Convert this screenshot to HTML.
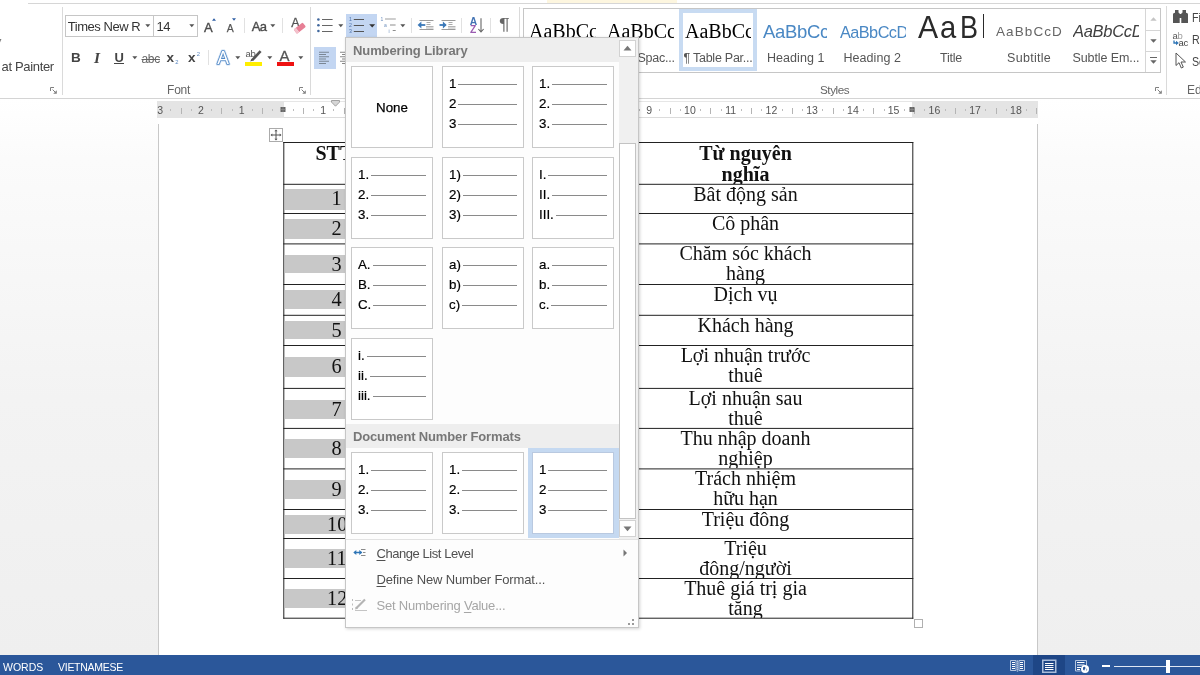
<!DOCTYPE html>
<html>
<head>
<meta charset="utf-8">
<title>Word</title>
<style>
*{box-sizing:border-box;margin:0;padding:0}
html,body{width:1200px;height:675px;overflow:hidden;background:#fff}
body{position:relative;will-change:transform;font-family:"Liberation Sans",sans-serif;font-size:12px;color:#444}
.abs{position:absolute}
.t{position:absolute;white-space:nowrap;line-height:1}
/* top */
#topline{left:28px;top:3px;width:1172px;height:1px;background:#d6d6d6}
#topyellow{left:547px;top:0;width:130px;height:3px;background:#fdf6df}
/* ribbon */
#ribbon{left:0;top:4px;width:1200px;height:94px;background:#fff}
#ribbonline{left:0;top:98px;width:1200px;height:1px;background:#d4d4d4}
.vsep{position:absolute;width:1px;background:#e1e1e1}
.gsep{position:absolute;width:1px;background:#dadada;top:7px;height:88px}
/* workspace */
#work{left:0;top:99px;width:1200px;height:556px;background:linear-gradient(#ffffff 0px,#fbfbfb 60px,#f3f3f3 300px,#efefef 557px)}
#page{left:158px;top:124px;width:880px;height:531px;background:#fff;border-left:1px solid #c8c8c8;border-right:1px solid #c8c8c8}
#pagetop{left:158px;top:99px;width:880px;height:25px;background:#fff}
/* ruler */
#ruler{left:157px;top:101px;width:881px;height:17px;background:#e4e4e4}
#rulerw{left:284px;top:101px;width:628px;height:17px;background:#fff;border-top:1px solid #e6e6e6;border-bottom:1px solid #dcdcdc}
.rn{position:absolute;top:104.6px;font-size:10.5px;line-height:11px;color:#555;width:20px;margin-left:-10px;text-align:center}
.rt{position:absolute;top:108px;width:1px;height:6px;background:#b4b4b4}
.rd{position:absolute;top:109px;width:1px;height:2px;background:#bdbdbd}
/* status */
#status{left:0;top:655px;width:1200px;height:20px;background:#2b579a}
#status .t{color:#fff;font-size:10.5px;top:6.5px}
/* table */
.hl{position:absolute;background:#2b2b2b;height:1px}
.vl{position:absolute;background:#2b2b2b;width:1px}
.cell{position:absolute;left:579px;width:333px;text-align:center;font-family:"Liberation Serif",serif;font-size:20px;line-height:20.4px;color:#111;white-space:nowrap;overflow:hidden}
.num{position:absolute;left:285px;width:62px;background:#c8c8c8;font-family:"Liberation Serif",serif;font-size:20.3px;line-height:18.3px;color:#111;text-align:left;overflow:hidden;white-space:nowrap}

.ddh{font-weight:bold;font-size:13px;color:#777;line-height:13px}
.mi{font-size:13px;color:#505050;line-height:15px}
.mi u{text-decoration-thickness:1px;text-underline-offset:2px}
.tile{position:absolute;width:82px;height:82px;background:#fff;border:1px solid #c9c9c9}
.tile .none{position:absolute;left:0;width:80px;top:33px;text-align:center;font-size:13.3px;line-height:15px;color:#000;-webkit-text-stroke:0.25px #000}
.tile .ln{position:absolute;left:6px;width:68px;height:16px;display:flex;align-items:center;font-size:13.3px;line-height:16px;color:#000;-webkit-text-stroke:0.2px #000}
.tile .ln i{flex:1;height:1px;background:#8a8a8a;box-shadow:0 0 0.6px #8a8a8a;margin-left:2px;margin-top:0px}
/*DDCSS*/

.sty{position:absolute;top:9px;height:40px;overflow:hidden}
.sty span{position:absolute;white-space:nowrap;line-height:1.15}
.sl{top:51px;font-size:12.5px;line-height:14px;color:#555;letter-spacing:-0.25px}
/*RIBCSS*/
</style>
</head>
<body>
<div class="abs" id="ribbon"></div>
<div class="abs" id="topyellow"></div>
<div class="abs" id="topline"></div>
<div class="abs" id="ribbonline"></div>
<div class="abs" id="work"></div>
<div class="abs" id="page"></div>
<div class="abs" id="pagetop"></div>
<div class="abs" id="ruler"></div>
<div class="abs" id="rulerw"></div>
<div id="rulermarks"><span class="rn" style="left:160.1px">3</span><i class="rd" style="left:170.3px"></i><i class="rt" style="left:180.5px"></i><i class="rd" style="left:190.7px"></i><span class="rn" style="left:200.9px">2</span><i class="rd" style="left:211.1px"></i><i class="rt" style="left:221.3px"></i><i class="rd" style="left:231.5px"></i><span class="rn" style="left:241.6px">1</span><i class="rd" style="left:251.8px"></i><i class="rt" style="left:262.0px"></i><i class="rd" style="left:272.2px"></i><i class="rd" style="left:292.6px"></i><i class="rt" style="left:302.8px"></i><i class="rd" style="left:313.0px"></i><span class="rn" style="left:323.1px">1</span><i class="rd" style="left:333.3px"></i><i class="rt" style="left:343.5px"></i><i class="rd" style="left:353.7px"></i><span class="rn" style="left:363.9px">2</span><i class="rd" style="left:374.1px"></i><i class="rt" style="left:384.3px"></i><i class="rd" style="left:394.5px"></i><span class="rn" style="left:404.6px">3</span><i class="rd" style="left:414.8px"></i><i class="rt" style="left:425.0px"></i><i class="rd" style="left:435.2px"></i><span class="rn" style="left:445.4px">4</span><i class="rd" style="left:455.6px"></i><i class="rt" style="left:465.8px"></i><i class="rd" style="left:476.0px"></i><span class="rn" style="left:486.1px">5</span><i class="rd" style="left:496.3px"></i><i class="rt" style="left:506.5px"></i><i class="rd" style="left:516.7px"></i><span class="rn" style="left:526.9px">6</span><i class="rd" style="left:537.1px"></i><i class="rt" style="left:547.3px"></i><i class="rd" style="left:557.5px"></i><span class="rn" style="left:567.6px">7</span><i class="rd" style="left:577.8px"></i><i class="rt" style="left:588.0px"></i><i class="rd" style="left:598.2px"></i><span class="rn" style="left:608.4px">8</span><i class="rd" style="left:618.6px"></i><i class="rt" style="left:628.8px"></i><i class="rd" style="left:639.0px"></i><span class="rn" style="left:649.1px">9</span><i class="rd" style="left:659.3px"></i><i class="rt" style="left:669.5px"></i><i class="rd" style="left:679.7px"></i><span class="rn" style="left:689.9px">10</span><i class="rd" style="left:700.1px"></i><i class="rt" style="left:710.3px"></i><i class="rd" style="left:720.5px"></i><span class="rn" style="left:730.6px">11</span><i class="rd" style="left:740.8px"></i><i class="rt" style="left:751.0px"></i><i class="rd" style="left:761.2px"></i><span class="rn" style="left:771.4px">12</span><i class="rd" style="left:781.6px"></i><i class="rt" style="left:791.8px"></i><i class="rd" style="left:802.0px"></i><span class="rn" style="left:812.1px">13</span><i class="rd" style="left:822.3px"></i><i class="rt" style="left:832.5px"></i><i class="rd" style="left:842.7px"></i><span class="rn" style="left:852.9px">14</span><i class="rd" style="left:863.1px"></i><i class="rt" style="left:873.3px"></i><i class="rd" style="left:883.5px"></i><span class="rn" style="left:893.6px">15</span><i class="rd" style="left:903.8px"></i><i class="rt" style="left:914.0px"></i><i class="rd" style="left:924.2px"></i><span class="rn" style="left:934.4px">16</span><i class="rd" style="left:944.6px"></i><i class="rt" style="left:954.8px"></i><i class="rd" style="left:965.0px"></i><span class="rn" style="left:975.1px">17</span><i class="rd" style="left:985.3px"></i><i class="rt" style="left:995.5px"></i><i class="rd" style="left:1005.7px"></i><span class="rn" style="left:1015.9px">18</span><i class="rd" style="left:1026.1px"></i><i class="rt" style="left:1036.3px"></i><svg class="abs" style="left:280px;top:107px" width="6" height="5" viewBox="0 0 6 5"><path d="M0.5 0h5v5h-5z" fill="#666"/><path d="M0.5 2.5h5M3 0v5" stroke="#999" stroke-width="0.6"/></svg><svg class="abs" style="left:909px;top:107px" width="6" height="5" viewBox="0 0 6 5"><path d="M0.5 0h5v5h-5z" fill="#666"/><path d="M0.5 2.5h5M3 0v5" stroke="#999" stroke-width="0.6"/></svg><svg class="abs" style="left:330.5px;top:100px" width="9" height="7" viewBox="0 0 9 7"><path d="M0.5 0.5h8v1.6L4.5 6.2L0.5 2.1z" fill="#d6d6d6" stroke="#9a9a9a" stroke-width="0.9"/></svg></div>
<!--RIBBON--><div id="rib">
<!-- left clipboard fragment -->
<span class="t" style="left:1.5px;top:59px;font-size:13px;line-height:15px;letter-spacing:-0.33px;color:#444">at Painter</span>
<svg class="abs" style="left:0;top:39px" width="2" height="4"><path d="M0 0h1.4l-1.2 3.5z" fill="#777"/></svg>
<i class="gsep" style="left:62px"></i>
<svg class="abs lau" style="left:50px;top:86.5px" width="7" height="7" viewBox="0 0 7 7"><path d="M0.5 4v-3.500h3.500" stroke="#808080" fill="none"/><path d="M2.600 2.600l3 3" stroke="#808080" fill="none"/><path d="M6.800 3.200v3.600h-3.600z" fill="#808080"/></svg>
<!-- font boxes -->
<div class="abs" style="left:65px;top:15px;width:89px;height:22px;border:1px solid #c6c6c6;background:#fff"></div>
<div class="abs" style="left:153px;top:15px;width:45px;height:22px;border:1px solid #c6c6c6;background:#fff"></div>
<span class="t" style="left:67.7px;top:19px;font-size:13px;line-height:15px;letter-spacing:-0.45px;color:#333">Times New R</span>
<span class="t" style="left:156.5px;top:19px;font-size:13px;line-height:15px;letter-spacing:-0.4px;color:#333">14</span>
<svg class="abs" style="left:145px;top:24px" width="6" height="4"><path d="M0.3 0.3h5L2.8 3.3z" fill="#555"/></svg>
<svg class="abs" style="left:189px;top:24px" width="6" height="4"><path d="M0.3 0.3h5L2.8 3.3z" fill="#555"/></svg>
<!-- grow / shrink -->
<span class="t" style="left:204px;top:19.500px;font-size:13px;line-height:15px;color:#4a4a4a;-webkit-text-stroke:0.350px #4a4a4a">A</span>
<svg class="abs" style="left:211.5px;top:17.5px" width="4" height="3"><path d="M0 2.8L2 0.2L4 2.8z" fill="#2f5fa5"/></svg>
<span class="t" style="left:226.700px;top:21.500px;font-size:10.500px;line-height:12px;color:#555;-webkit-text-stroke:0.250px #555">A</span>
<svg class="abs" style="left:231.7px;top:17.5px" width="4" height="3"><path d="M0 0.2L2 2.8L4 0.2z" fill="#2f5fa5"/></svg>
<i class="vsep" style="left:244px;top:18px;height:15px"></i>
<span class="t" style="left:251.700px;top:18.500px;font-size:13px;line-height:15px;letter-spacing:-0.700px;color:#4a4a4a;-webkit-text-stroke:0.350px #4a4a4a">Aa</span>
<svg class="abs" style="left:270px;top:24px" width="6" height="4"><path d="M0.3 0.3h5L2.8 3.3z" fill="#555"/></svg>
<i class="vsep" style="left:282px;top:18px;height:15px"></i>
<!-- clear formatting -->
<span class="t" style="left:291.300px;top:16px;font-size:12.500px;line-height:14px;color:#555;-webkit-text-stroke:0.300px #555">A</span>
<svg class="abs" style="left:293px;top:21px" width="14" height="13" viewBox="0 0 14 13"><g transform="rotate(-38 7 7)"><rect x="1" y="4.200" width="11.500" height="5.600" rx="1.300" fill="#e77f95"/><rect x="1" y="4.200" width="2.200" height="5.600" rx="0.800" fill="#f4c3cd"/><rect x="3.200" y="4.200" width="0.700" height="5.600" fill="#fff" opacity="0.700"/></g></svg>
<i class="gsep" style="left:310px"></i>
<!-- row 2 -->
<span class="t" style="left:71px;top:50px;font-size:13.5px;line-height:15px;font-weight:bold;color:#444">B</span>
<span class="t" style="left:94px;top:50px;font-family:'Liberation Serif',serif;font-size:15.500px;line-height:15px;font-style:italic;font-weight:bold;color:#444">I</span>
<span class="t" style="left:114.5px;top:50px;font-size:13px;line-height:15px;color:#444;font-weight:bold;letter-spacing:-0.3px">U</span>
<i class="abs" style="left:114px;top:63px;width:10px;height:1px;background:#444"></i>
<svg class="abs" style="left:131.5px;top:56px" width="6" height="4"><path d="M0.3 0.3h5L2.8 3.3z" fill="#555"/></svg>
<span class="t" style="left:141.5px;top:52px;font-size:12px;line-height:14px;color:#666;text-decoration:line-through;letter-spacing:-0.3px">abc</span>
<span class="t" style="left:166.5px;top:50px;font-size:13.5px;line-height:15px;font-weight:bold;color:#444">x</span>
<span class="t" style="left:175.300px;top:58.500px;font-size:5.800px;line-height:6px;color:#5b87c0">2</span>
<span class="t" style="left:188px;top:50px;font-size:13.5px;line-height:15px;font-weight:bold;color:#444">x</span>
<span class="t" style="left:196.800px;top:50.500px;font-size:5.800px;line-height:6px;color:#5b87c0">2</span>
<i class="vsep" style="left:208px;top:50px;height:15px"></i>
<!-- text effects A -->
<svg class="abs" style="left:214px;top:48px" width="18" height="18" viewBox="0 0 18 18"><text x="9" y="15.5" text-anchor="middle" font-family="Liberation Sans" font-size="17.5" fill="none" stroke="#cfe0f4" stroke-width="3" stroke-linejoin="round">A</text><text x="9" y="15.5" text-anchor="middle" font-family="Liberation Sans" font-size="17.5" fill="#fff" stroke="#4f87c5" stroke-width="1.6" stroke-linejoin="round" paint-order="stroke">A</text></svg>
<svg class="abs" style="left:234.5px;top:56px" width="6" height="4"><path d="M0.3 0.3h5L2.8 3.3z" fill="#555"/></svg>
<!-- highlight -->
<span class="t" style="left:245.5px;top:49px;font-size:9.5px;line-height:10px;color:#555;letter-spacing:-0.3px">ab</span>
<svg class="abs" style="left:249px;top:49px" width="14" height="13" viewBox="0 0 14 13"><path d="M3.2 11.2L11.6 2.2" stroke="#555" stroke-width="2.6" stroke-linecap="butt"/><path d="M1.2 12.5l1.2-2.8 1.9 1.8z" fill="#555"/></svg>
<i class="abs" style="left:245px;top:62px;width:17px;height:4px;background:#ffee00"></i>
<svg class="abs" style="left:266.5px;top:56px" width="6" height="4"><path d="M0.3 0.3h5L2.8 3.3z" fill="#555"/></svg>
<!-- font colour -->
<span class="t" style="left:279.500px;top:48px;font-size:15px;line-height:16px;color:#555;-webkit-text-stroke:0.300px #555">A</span>
<i class="abs" style="left:277px;top:62px;width:17px;height:4px;background:#ee1111"></i>
<svg class="abs" style="left:298px;top:56px" width="6" height="4"><path d="M0.3 0.3h5L2.8 3.3z" fill="#555"/></svg>
<span class="t" style="left:167px;top:83px;font-size:12px;line-height:14px;letter-spacing:-0.2px;color:#666">Font</span>
<svg class="abs lau" style="left:299px;top:86.5px" width="7" height="7" viewBox="0 0 7 7"><path d="M0.5 4v-3.500h3.500" stroke="#808080" fill="none"/><path d="M2.600 2.600l3 3" stroke="#808080" fill="none"/><path d="M6.800 3.200v3.600h-3.600z" fill="#808080"/></svg>
<!-- paragraph group row1 -->
<svg class="abs" style="left:316px;top:16px" width="18" height="18" viewBox="0 0 18 18"><circle cx="2.4" cy="3.5" r="1.3" fill="#41689e"/><circle cx="2.4" cy="9.3" r="1.3" fill="#41689e"/><circle cx="2.4" cy="15" r="1.3" fill="#41689e"/><path d="M6 3.5h10.6M6 9.5h10.6M6 15.5h10.6" stroke="#666" stroke-width="1"/></svg>
<svg class="abs" style="left:337.5px;top:24px" width="6" height="4"><path d="M0.3 0.3h5L2.8 3.3z" fill="#555"/></svg>
<div class="abs" style="left:346px;top:14px;width:31px;height:23px;background:#c3d6f2"></div>
<svg class="abs" style="left:348px;top:16px" width="18" height="18" viewBox="0 0 18 18"><g font-family="Liberation Sans" font-size="5.2" fill="#4d74ad"><text x="0.9" y="5.4">1</text><text x="0.9" y="11.2">2</text><text x="0.9" y="17">3</text></g><path d="M5.8 3.5h10.2M5.8 9.5h10.2M5.8 15.5h10.2" stroke="#555" stroke-width="1"/></svg>
<svg class="abs" style="left:368.5px;top:24px" width="7" height="4"><path d="M0.2 0.2h6L3.2 3.6z" fill="#333"/></svg>
<svg class="abs" style="left:380px;top:16px" width="18" height="18" viewBox="0 0 18 18"><g font-family="Liberation Sans" font-size="5" fill="#6d8fbd"><text x="0.4" y="5.2">1</text><text x="4" y="10.8">a</text><text x="8.6" y="16.6">i</text></g><path d="M5 3h10.8" stroke="#c2c2c2" stroke-width="1.6"/><path d="M10 9h5.6M12.7 14.5h3" stroke="#8e8e8e" stroke-width="1.2"/></svg>
<svg class="abs" style="left:399.5px;top:24px" width="6" height="4"><path d="M0.3 0.3h5L2.8 3.3z" fill="#555"/></svg>
<i class="vsep" style="left:411px;top:18px;height:15px"></i>
<svg class="abs" style="left:417px;top:19px" width="17" height="12" viewBox="0 0 17 12"><path d="M2.500 1.500h14M2.500 10.500h14" stroke="#9a9a9a" stroke-width="1"/><path d="M9.500 3.500h4M9.500 5.500h4" stroke="#aaa" stroke-width="1"/><path d="M9 7.500h7.500M9 9h7.500" stroke="#b5b5b5" stroke-width="1"/><path d="M2 6h6.300" stroke="#3a78b8" stroke-width="1.800"/><path d="M0.600 6L4.400 2.600v6.800z" fill="#3a78b8"/></svg>
<svg class="abs" style="left:438.500px;top:19px" width="17" height="12" viewBox="0 0 17 12"><path d="M2.500 1.500h14M2.500 10.500h14" stroke="#9a9a9a" stroke-width="1"/><path d="M9.500 3.500h4M9.500 5.500h4" stroke="#aaa" stroke-width="1"/><path d="M9 7.500h7.500M9 9h7.500" stroke="#b5b5b5" stroke-width="1"/><path d="M0.500 6h6" stroke="#3a78b8" stroke-width="1.800"/><path d="M7.700 6L3.900 2.600v6.800z" fill="#3a78b8"/></svg>
<i class="vsep" style="left:461px;top:18px;height:15px"></i>
<span class="t" style="left:469.700px;top:16.500px;font-size:10.300px;line-height:10px;color:#4474b4;font-weight:bold">A</span>
<span class="t" style="left:470px;top:25px;font-size:10.300px;line-height:10px;color:#9a5cb0;font-weight:bold">Z</span>
<svg class="abs" style="left:477.300px;top:18px" width="8" height="15" viewBox="0 0 8 15"><path d="M4 0.300v13.500M1.400 11L4 14l2.600-3" stroke="#666" stroke-width="1.100" fill="none"/></svg>
<i class="vsep" style="left:490px;top:18px;height:15px"></i>
<span class="t" style="left:498.5px;top:15.5px;font-size:17px;line-height:18px;color:#666;transform:scaleX(1.18);transform-origin:0 0">¶</span>
<i class="gsep" style="left:519px"></i>
<!-- row2 align -->
<div class="abs" style="left:314px;top:47px;width:22px;height:22px;background:#c3d6f2"></div>
<svg class="abs" style="left:318px;top:51px" width="13" height="14" viewBox="0 0 13 14"><path d="M1 1.3h10M1 5.8h10M1 10.3h10" stroke="#7b8794" stroke-width="1.1"/><path d="M1 3.55h7M1 8.05h7M1 12.5h7" stroke="#7b8794" stroke-width="1.1"/></svg>
<svg class="abs" style="left:339px;top:51px" width="7" height="14" viewBox="0 0 7 14"><path d="M1 1.3h6M1 5.8h6M1 10.3h6" stroke="#888" stroke-width="1.1"/><path d="M3 3.55h4M3 8.05h4M3 12.5h4" stroke="#888" stroke-width="1.1"/></svg>
<!-- styles gallery -->
<div class="abs" style="left:523px;top:8px;width:638px;height:65px;border:1px solid #c6c6c6;background:#fff"></div>
<i class="abs" style="left:1145px;top:9px;width:1px;height:63px;background:#d6d6d6"></i>
<i class="abs" style="left:1146px;top:30px;width:14px;height:1px;background:#d6d6d6"></i>
<i class="abs" style="left:1146px;top:51px;width:14px;height:1px;background:#d6d6d6"></i>
<svg class="abs" style="left:1150px;top:17px" width="7" height="4"><path d="M0.3 3.7L3.5 0.3L6.7 3.7z" fill="#c4c4c4"/></svg>
<svg class="abs" style="left:1150px;top:39px" width="7" height="4"><path d="M0.3 0.3h6.4L3.5 3.7z" fill="#666"/></svg>
<svg class="abs" style="left:1150px;top:57px" width="7" height="8"><path d="M0 0.5h7" stroke="#666"/><path d="M0.3 3.3h6.4L3.5 6.7z" fill="#666"/></svg>
<div class="sty" style="left:529px;width:66.500px"><span style="font-family:'Liberation Serif',serif;font-size:20px;color:#000;top:11px;left:0px">AaBbCc</span></div>
<div class="sty" style="left:607px;width:67px"><span style="font-family:'Liberation Serif',serif;font-size:20px;color:#000;top:11px;left:0px">AaBbCc</span></div>
<span class="t sl" style="left:637.5px">Spac...</span>
<div class="abs" style="left:679px;top:9px;width:78px;height:62px;border:4px solid #c8dbf2;background:#fff"></div>
<div class="sty" style="left:685px;width:66px"><span style="font-family:'Liberation Serif',serif;font-size:20px;color:#000;top:11px;left:0px">AaBbCc</span></div>
<span class="t sl" style="left:683.5px">¶ Table Par...</span>
<div class="sty" style="left:763px;width:64px"><span style="font-size:18.5px;color:#4a88c4;top:11.5px;left:0px;letter-spacing:-0.3px">AaBbCc</span></div>
<span class="t sl" style="left:767px;letter-spacing:0.050px">Heading 1</span>
<div class="sty" style="left:840px;width:66px"><span style="font-size:16.3px;color:#4a88c4;top:14px;left:0px;letter-spacing:-0.55px">AaBbCcD</span></div>
<span class="t sl" style="left:843.500px;letter-spacing:0.050px">Heading 2</span>
<div class="sty" style="left:918px;width:66px"><span style="font-size:31.4px;color:#2a2a2a;top:1.2px;left:0px;transform:scaleX(0.96);transform-origin:0 0">A</span><span style="font-size:31.4px;color:#2a2a2a;top:1.2px;left:22.3px;transform:scaleX(0.93);transform-origin:0 0">a</span><span style="font-size:31.4px;color:#2a2a2a;top:1.2px;left:41.5px;transform:scaleX(0.86);transform-origin:0 0">B</span><i style="position:absolute;left:64.5px;top:5px;width:1.6px;height:24px;background:#2a2a2a"></i></div>
<span class="t sl" style="left:940px">Title</span>
<div class="sty" style="left:996px;width:66px"><span style="font-size:13.5px;color:#666;top:15.3px;left:0px;letter-spacing:1.1px">AaBbCcD</span></div>
<span class="t sl" style="left:1007px;letter-spacing:0.300px">Subtitle</span>
<div class="sty" style="left:1073px;width:66px"><span style="font-size:16.5px;color:#404040;top:13px;left:0px;font-style:italic;letter-spacing:-0.3px">AaBbCcD</span></div>
<span class="t sl" style="left:1072.500px;letter-spacing:-0.100px">Subtle Em...</span>
<span class="t" style="left:820px;top:83px;font-size:11.7px;line-height:14px;letter-spacing:-0.45px;color:#666">Styles</span>
<svg class="abs lau" style="left:1155px;top:86.5px" width="7" height="7" viewBox="0 0 7 7"><path d="M0.5 4v-3.500h3.500" stroke="#808080" fill="none"/><path d="M2.600 2.600l3 3" stroke="#808080" fill="none"/><path d="M6.800 3.200v3.600h-3.600z" fill="#808080"/></svg>
<i class="gsep" style="left:1166px;top:6px;height:89px"></i>
<!-- editing -->
<svg class="abs" style="left:1172px;top:9px" width="17" height="15" viewBox="0 0 17 15"><path d="M3 1h3.5v3H3zM10.5 1H14v3h-3.5z" fill="#555"/><path d="M1 5.5c0-1 .8-1.8 2-1.8h3.5c.8 0 1.2.6 1.2 1.3V14H1zM9.3 5c0-.7.4-1.3 1.2-1.3H14c1.2 0 2 .8 2 1.8V14H9.3z" fill="#555"/><rect x="7" y="5" width="3" height="4" fill="#555"/></svg>
<span class="t" style="left:1191.500px;top:10px;font-size:13px;line-height:15px;color:#444;transform:scaleX(0.82);transform-origin:0 0">Fi</span>
<span class="t" style="left:1172.5px;top:30.5px;font-size:9.5px;line-height:9px;color:#555;letter-spacing:-0.2px">a<span style="color:#999">b</span></span>
<span class="t" style="left:1178.5px;top:38px;font-size:9.5px;line-height:9px;color:#444;letter-spacing:-0.2px">ac</span>
<svg class="abs" style="left:1172.5px;top:40px" width="6" height="6" viewBox="0 0 6 6"><path d="M1 0.500v2.500h2.500" stroke="#2e75b6" stroke-width="1.300" fill="none"/><path d="M5.800 3L3 0.800v4.400z" fill="#2e75b6"/></svg>
<span class="t" style="left:1191.500px;top:32px;font-size:13px;line-height:15px;color:#444;transform:scaleX(0.82);transform-origin:0 0">Re</span>
<svg class="abs" style="left:1175px;top:52px" width="12" height="17" viewBox="0 0 12 17"><path d="M1 1v12.5l3-2.8 2.3 5.3 2-.9L6 10h4.5z" fill="#fff" stroke="#555" stroke-width="1" stroke-linejoin="round"/></svg>
<span class="t" style="left:1191.500px;top:54px;font-size:13px;line-height:15px;color:#444;transform:scaleX(0.82);transform-origin:0 0">Se</span>
<span class="t" style="left:1187px;top:83px;font-size:12px;line-height:14px;color:#666">Ed</span>

</div>
<!--/RIBBON-->
<!--DOC--><div id="doc"><div class="abs" style="left:269px;top:128px;width:14px;height:14px;border:1px solid #ababab;background:#fff"></div><svg class="abs" style="left:269px;top:128px" width="14" height="14" viewBox="0 0 14 14"><path d="M7 2.5v9M2.5 7h9" stroke="#555" stroke-width="1" fill="none"/><path d="M7 1.5l1.6 1.8h-3.2zM7 12.5l1.6-1.8h-3.2zM1.5 7l1.8-1.6v3.2zM12.5 7l-1.8-1.6v3.2z" fill="#555"/></svg><div class="cell" style="top:142px;height:42px;font-weight:bold;padding-top:1.2px">Từ nguyên<br>nghĩa</div><div class="cell" style="top:184px;height:29px">Bât động sản</div><div class="cell" style="top:213px;height:30px">Cô phân</div><div class="cell" style="top:243px;height:41px">Chăm sóc khách<br>hàng</div><div class="cell" style="top:284px;height:31px">Dịch vụ</div><div class="cell" style="top:315px;height:30px">Khách hàng</div><div class="cell" style="top:345px;height:43px">Lợi nhuận trước<br>thuê</div><div class="cell" style="top:388px;height:40px">Lợi nhuận sau<br>thuê</div><div class="cell" style="top:428px;height:40px">Thu nhập doanh<br>nghiệp</div><div class="cell" style="top:468px;height:41px">Trách nhiệm<br>hữu hạn</div><div class="cell" style="top:509px;height:29px">Triệu đông</div><div class="cell" style="top:538px;height:40px">Triệu<br>đông/người</div><div class="cell" style="top:578px;height:40px">Thuê giá trị gia<br>tăng</div><div class="t" style="left:315.5px;top:143.2px;font-family:'Liberation Serif',serif;font-weight:bold;font-size:20px;color:#111;line-height:20.4px">STT</div><div class="num" style="top:188.5px;height:21.0px;padding-left:46.5px">1</div><div class="num" style="top:219.0px;height:19.5px;padding-left:46.5px">2</div><div class="num" style="top:254.5px;height:18.5px;padding-left:46.5px">3</div><div class="num" style="top:290.0px;height:18.5px;padding-left:46.5px">4</div><div class="num" style="top:321.0px;height:18.0px;padding-left:46.5px">5</div><div class="num" style="top:357.0px;height:19.5px;padding-left:46.5px">6</div><div class="num" style="top:399.5px;height:19.0px;padding-left:46.5px">7</div><div class="num" style="top:439.0px;height:19.0px;padding-left:46.5px">8</div><div class="num" style="top:479.5px;height:19.0px;padding-left:46.5px">9</div><div class="num" style="top:515.0px;height:18.5px;padding-left:42px">10</div><div class="num" style="top:549.0px;height:19.0px;padding-left:42px">11</div><div class="num" style="top:588.5px;height:19.0px;padding-left:42px">12</div><svg class="abs" style="left:283px;top:140px" width="632" height="480" viewBox="283 140 632 480"><rect x="283.3" y="142" width="630" height="1" fill="#222"/><rect x="283.3" y="183.8" width="630" height="1" fill="#222"/><rect x="283.3" y="213" width="630" height="1" fill="#222"/><rect x="283.3" y="243.4" width="630" height="1" fill="#222"/><rect x="283.3" y="284" width="630" height="1" fill="#222"/><rect x="283.3" y="314.8" width="630" height="1" fill="#222"/><rect x="283.3" y="345" width="630" height="1" fill="#222"/><rect x="283.3" y="387.9" width="630" height="1" fill="#222"/><rect x="283.3" y="427.9" width="630" height="1" fill="#222"/><rect x="283.3" y="468.4" width="630" height="1" fill="#222"/><rect x="283.3" y="509" width="630" height="1" fill="#222"/><rect x="283.3" y="538" width="630" height="1" fill="#222"/><rect x="283.3" y="578" width="630" height="1" fill="#222"/><rect x="283.3" y="617.7" width="630" height="1" fill="#222"/><rect x="283.3" y="142" width="1" height="476.7" fill="#222"/><rect x="912.3" y="142" width="1" height="476.7" fill="#222"/></svg><div class="abs" style="left:914px;top:619px;width:9px;height:9px;border:1px solid #b0b0b0;background:#fff"></div></div><!--/DOC-->
<!--DROPDOWN--><div id="dd"><div class="abs" style="left:345px;top:37px;width:294px;height:591px;background:#fdfdfd;border:1px solid #c6c6c6;box-shadow:1px 1px 3px rgba(0,0,0,.18)"></div><div class="abs" style="left:346px;top:38px;width:273px;height:24px;background:#eeeeee"></div><span class="t ddh" style="left:353px;top:44px;letter-spacing:-0.1px">Numbering Library</span><div class="abs" style="left:346px;top:424px;width:273px;height:24px;background:#eeeeee"></div><span class="t ddh" style="left:353px;top:430px;letter-spacing:-0.15px">Document Number Formats</span><div class="abs" style="left:528px;top:448px;width:91px;height:90px;background:#c5d9f1"></div><div class="tile" style="left:351px;top:66px;border-color:#c9c9c9"><span class="none">None</span></div><div class="tile" style="left:442px;top:66px;border-color:#c9c9c9"><div class="ln" style="top:9px"><span>1</span><i></i></div><div class="ln" style="top:29px"><span>2</span><i></i></div><div class="ln" style="top:49px"><span>3</span><i></i></div></div><div class="tile" style="left:532px;top:66px;border-color:#c9c9c9"><div class="ln" style="top:9px"><span>1.</span><i></i></div><div class="ln" style="top:29px"><span>2.</span><i></i></div><div class="ln" style="top:49px"><span>3.</span><i></i></div></div><div class="tile" style="left:351px;top:157px;border-color:#c9c9c9"><div class="ln" style="top:9px"><span>1.</span><i></i></div><div class="ln" style="top:29px"><span>2.</span><i></i></div><div class="ln" style="top:49px"><span>3.</span><i></i></div></div><div class="tile" style="left:442px;top:157px;border-color:#c9c9c9"><div class="ln" style="top:9px"><span>1)</span><i></i></div><div class="ln" style="top:29px"><span>2)</span><i></i></div><div class="ln" style="top:49px"><span>3)</span><i></i></div></div><div class="tile" style="left:532px;top:157px;border-color:#c9c9c9"><div class="ln" style="top:9px"><span>I.</span><i></i></div><div class="ln" style="top:29px"><span>II.</span><i></i></div><div class="ln" style="top:49px"><span>III.</span><i></i></div></div><div class="tile" style="left:351px;top:247px;border-color:#c9c9c9"><div class="ln" style="top:9px"><span>A.</span><i></i></div><div class="ln" style="top:29px"><span>B.</span><i></i></div><div class="ln" style="top:49px"><span>C.</span><i></i></div></div><div class="tile" style="left:442px;top:247px;border-color:#c9c9c9"><div class="ln" style="top:9px"><span>a)</span><i></i></div><div class="ln" style="top:29px"><span>b)</span><i></i></div><div class="ln" style="top:49px"><span>c)</span><i></i></div></div><div class="tile" style="left:532px;top:247px;border-color:#c9c9c9"><div class="ln" style="top:9px"><span>a.</span><i></i></div><div class="ln" style="top:29px"><span>b.</span><i></i></div><div class="ln" style="top:49px"><span>c.</span><i></i></div></div><div class="tile" style="left:351px;top:338px;border-color:#c9c9c9"><div class="ln" style="top:9px"><span>i.</span><i></i></div><div class="ln" style="top:29px"><span>ii.</span><i></i></div><div class="ln" style="top:49px"><span>iii.</span><i></i></div></div><div class="tile" style="left:351px;top:452px;border-color:#c9c9c9"><div class="ln" style="top:9px"><span>1.</span><i></i></div><div class="ln" style="top:29px"><span>2.</span><i></i></div><div class="ln" style="top:49px"><span>3.</span><i></i></div></div><div class="tile" style="left:442px;top:452px;border-color:#c9c9c9"><div class="ln" style="top:9px"><span>1.</span><i></i></div><div class="ln" style="top:29px"><span>2.</span><i></i></div><div class="ln" style="top:49px"><span>3.</span><i></i></div></div><div class="tile" style="left:532px;top:452px;border-color:#b9c9e0"><div class="ln" style="top:9px"><span>1</span><i></i></div><div class="ln" style="top:29px"><span>2</span><i></i></div><div class="ln" style="top:49px"><span>3</span><i></i></div></div><div class="abs" style="left:619px;top:38px;width:19px;height:501px;background:#f0f0f0"></div><div class="abs" style="left:619px;top:40px;width:17px;height:17px;background:#fff;border:1px solid #d2d2d2"></div><svg class="abs" style="left:623px;top:45px" width="9" height="6"><path d="M0.5 5.5L4.5 0.8L8.5 5.5z" fill="#777"/></svg><div class="abs" style="left:619px;top:143px;width:17px;height:376px;background:#fff;border:1px solid #c3c3c3"></div><div class="abs" style="left:619px;top:520px;width:17px;height:17px;background:#fff;border:1px solid #d2d2d2"></div><svg class="abs" style="left:623px;top:526px" width="9" height="6"><path d="M0.5 0.5L4.5 5.2L8.5 0.5z" fill="#777"/></svg><div class="abs" style="left:346px;top:539px;width:292px;height:1px;background:#e2e2e2"></div><span class="t mi" style="left:376.5px;top:546px;letter-spacing:-0.44px"><u>C</u>hange List Level</span><span class="t mi" style="left:376.5px;top:572px;letter-spacing:-0.15px"><u>D</u>efine New Number Format...</span><span class="t mi" style="left:376.5px;top:598px;letter-spacing:-0.21px;color:#a6a6a6">Set Numbering <u>V</u>alue...</span><svg class="abs" style="left:623px;top:549px" width="5" height="8"><path d="M0.5 0.5L4 4L0.5 7.5z" fill="#777"/></svg><svg class="abs" style="left:353px;top:547px" width="13" height="11" viewBox="0 0 13 11"><path d="M8 2.500h4.500M10 5.500h2.500M8 8.500h4.500" stroke="#8a8a8a" stroke-width="1" fill="none"/><path d="M1.500 5.500h7" stroke="#2e75b6" stroke-width="1.500" fill="none"/><path d="M0.300 5.500L3.300 2.900v5.200zM9.300 5.500L6.300 2.900v5.200z" fill="#2e75b6"/></svg><svg class="abs" style="left:351px;top:597px" width="17" height="15" viewBox="0 0 17 15"><path d="M1.5 2v2M1.5 6.5v2M1.5 11v2" stroke="#bdbdbd" stroke-width="1"/><path d="M4 3.5h6M4 13.5h12" stroke="#c4c4c4" stroke-width="1"/><path d="M5 11.5L14 2.5" stroke="#b4b4b4" stroke-width="2.2"/><path d="M4 12.5l1-3 2 2z" fill="#b4b4b4"/></svg><svg class="abs" style="left:627px;top:619px" width="8" height="8"><path d="M5 0h2v2h-2zM5 4h2v2h-2zM1 4h2v2h-2z" fill="#9a9a9a"/></svg></div><!--/DROPDOWN-->
<div class="abs" id="status">
  <span class="t" style="left:3px">WORDS</span>
  <span class="t" style="left:58px;letter-spacing:-0.27px">VIETNAMESE</span>
</div>
<!--STATUSICONS--><div id="sticons">
<div class="abs" style="left:1033px;top:655px;width:32px;height:20px;background:#1e4686"></div>
<svg class="abs" style="left:1010px;top:659px" width="15" height="14" viewBox="0 0 15 14"><path d="M0.500 1.500h5.500v10h-5.500zM9 1.500h5.500v10H9z" fill="none" stroke="#b4c5df" stroke-width="1"/><path d="M7.500 1.500v11" stroke="#dbe4f1" stroke-width="1.400" stroke-dasharray="1.200 0.800"/><path d="M2 3.500h3M2 5.500h3M2 7.500h3M2 9.500h3M10 3.500h3M10 5.500h3M10 7.500h3M10 9.500h3" stroke="#fff" stroke-width="1"/></svg>
<svg class="abs" style="left:1042px;top:659px" width="15" height="15" viewBox="0 0 15 15"><rect x="0.750" y="1.250" width="13" height="12" fill="none" stroke="#a9bcda" stroke-width="1.500"/><path d="M3 4.500h8.500M3 6.500h8.500M3 8.500h8.500M3 10.500h8.500" stroke="#fff" stroke-width="1"/></svg>
<svg class="abs" style="left:1074px;top:659px" width="16" height="15" viewBox="0 0 16 15"><path d="M1.500 1.500h11v5M1.500 1.500v10.500h5" fill="none" stroke="#b4c5df" stroke-width="1"/><path d="M3 3.500h7.500M3 6h7.500M3 8.500h4M3 10.500h3" stroke="#fff" stroke-width="1"/><circle cx="11" cy="10" r="4" fill="#fff"/><path d="M9 8.500c1-1.500 2.500-.5 2.500.500s-1 1-1 2-1.500 0-1.500-1zM12.500 9.500c.8 0 1 1.500 0 2.500z" fill="#2b579a"/></svg>
<i class="abs" style="left:1102px;top:665px;width:8px;height:2px;background:#fff"></i>
<i class="abs" style="left:1114px;top:666px;width:86px;height:1px;background:#dfe7f3"></i>
<i class="abs" style="left:1166px;top:660px;width:4px;height:13px;background:#fff"></i>
</div>
<!--/STATUSICONS-->
</body>
</html>
